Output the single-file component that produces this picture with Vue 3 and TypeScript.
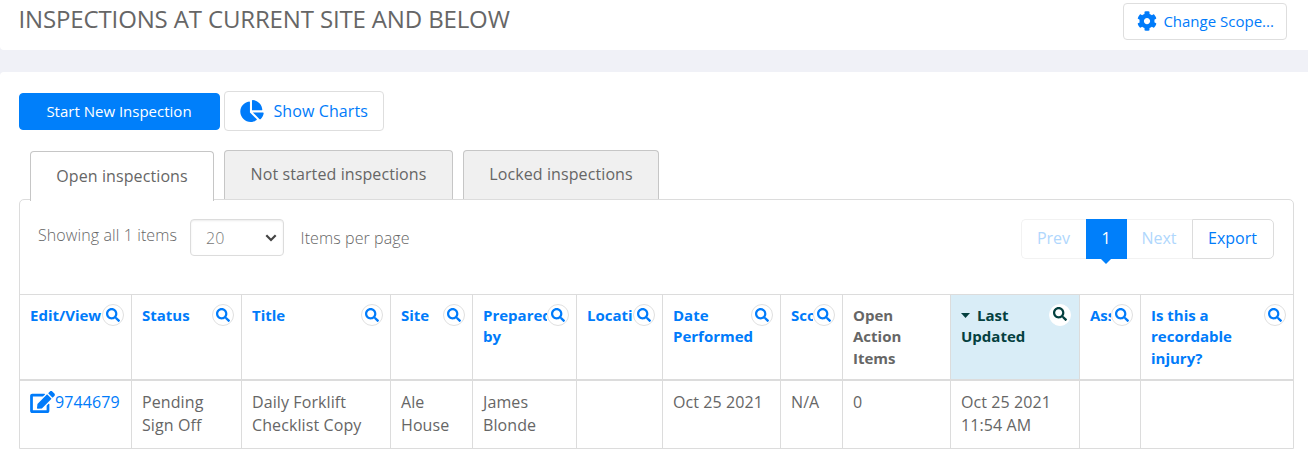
<script setup lang="ts">
import { ref } from 'vue'

interface Column {
  label: string
  search: boolean
  sorted?: boolean
}

interface Tab {
  label: string
  width: number
}

const columns: Column[] = [
  { label: 'Edit/View', search: true },
  { label: 'Status', search: true },
  { label: 'Title', search: true },
  { label: 'Site', search: true },
  { label: 'Prepared by', search: true },
  { label: 'Location', search: true },
  { label: 'Date Performed', search: true },
  { label: 'Score', search: true },
  { label: 'Open Action Items', search: false },
  { label: 'Last Updated', search: true, sorted: true },
  { label: 'Asset', search: true },
  { label: 'Is this a recordable injury?', search: true },
]

const row: string[] = [
  '9744679',
  'Pending Sign Off',
  'Daily Forklift Checklist Copy',
  'Ale House',
  'James Blonde',
  '',
  'Oct 25 2021',
  'N/A',
  '0',
  'Oct 25 2021 11:54 AM',
  '',
  '',
]

const tabs: Tab[] = [
  { label: 'Open inspections', width: 184 },
  { label: 'Not started inspections', width: 229 },
  { label: 'Locked inspections', width: 196 },
]
const activeTab = ref(0)
</script>

<template>
  <div class="page">
    <header class="card heading">
      <h1>Inspections at current site and below</h1>
      <button class="btn scope">
        <svg class="cog" viewBox="0 0 512 512"><path d="M487.4 315.7l-42.6-24.6c4.3-23.2 4.3-47 0-70.2l42.6-24.6c4.9-2.8 7.1-8.6 5.5-14-11.1-35.6-30-67.8-54.7-94.6-3.8-4.1-10-5.1-14.8-2.3L380.8 110c-17.9-15.4-38.5-27.3-60.8-35.1V25.8c0-5.6-3.9-10.5-9.4-11.7-36.7-8.2-74.3-7.8-109.2 0-5.5 1.2-9.4 6.1-9.4 11.7V75c-22.2 7.9-42.8 19.8-60.8 35.1L88.7 85.5c-4.9-2.8-11-1.9-14.8 2.3-24.7 26.7-43.6 58.9-54.7 94.6-1.7 5.4.6 11.2 5.5 14L67.3 221c-4.3 23.2-4.3 47 0 70.2l-42.6 24.6c-4.9 2.8-7.1 8.6-5.5 14 11.1 35.6 30 67.8 54.7 94.6 3.8 4.1 10 5.1 14.8 2.3l42.6-24.6c17.9 15.4 38.5 27.3 60.8 35.1v49.2c0 5.6 3.9 10.5 9.4 11.7 36.7 8.2 74.3 7.8 109.2 0 5.5-1.2 9.4-6.1 9.4-11.7v-49.2c22.2-7.9 42.8-19.8 60.8-35.1l42.6 24.6c4.9 2.8 11 1.9 14.8-2.3 24.7-26.7 43.6-58.9 54.7-94.6 1.5-5.5-.7-11.3-5.6-14.1zM256 336c-44.1 0-80-35.9-80-80s35.9-80 80-80 80 35.9 80 80-35.9 80-80 80z" /></svg>
        <span>Change Scope...</span>
      </button>
    </header>

    <main class="card content">
      <div class="actions">
        <button class="btn primary">Start New Inspection</button>
        <button class="btn charts">
          <svg class="pie" viewBox="0 0 544 512"><path d="M527.79 288H290.5l158.03 158.03c6.04 6.04 15.98 6.53 22.19.68 38.7-36.46 65.32-85.61 73.13-140.86 1.34-9.46-6.51-17.85-16.06-17.85zm-15.83-64.8C503.72 103.74 408.26 8.28 288.8.04 279.68-.59 272 7.1 272 16.24V240h223.77c9.14 0 16.82-7.68 16.19-16.8zM224 288V50.71c0-9.55-8.39-17.4-17.84-16.06C86.99 51.49-4.1 155.6.14 280.37 4.5 408.51 114.83 513.59 243.03 511.98c50.4-.63 96.97-16.87 135.26-44.03 7.9-5.6 8.42-17.23 1.57-24.08L224 288z" /></svg>
          <span>Show Charts</span>
        </button>
      </div>

      <nav class="tabs">
        <button
          v-for="(tab, i) in tabs"
          :key="tab.label"
          class="tab"
          :class="{ active: i === activeTab }"
          :style="{ width: tab.width + 'px' }"
          @click="activeTab = i"
        >{{ tab.label }}</button>
      </nav>

      <section class="panel">
        <div class="toolbar">
          <span class="showing">Showing all 1 items</span>
          <div class="select">
            <span>20</span>
            <svg class="chevron" viewBox="0 0 12 8"><path d="M1.3 1.3L6 6L10.7 1.3" /></svg>
          </div>
          <span class="per-page">Items per page</span>
          <div class="pager">
            <span class="page-btn prev">Prev</span>
            <span class="page-btn current">1</span>
            <span class="page-btn next">Next</span>
            <span class="page-btn export">Export</span>
          </div>
        </div>

        <div class="grid head">
          <div v-for="col in columns" :key="col.label" class="cell" :class="{ sorted: col.sorted, plain: !col.search }">
            <span class="label"><i v-if="col.sorted" class="caret"></i>{{ col.label }}</span>
            <span v-if="col.search" class="finder">
              <span class="circle">
                <svg viewBox="0 0 512 512"><path d="M505 442.7L405.3 343c-4.5-4.5-10.6-7-17-7H372c27.6-35.3 44-79.7 44-128C416 93.1 322.9 0 208 0S0 93.1 0 208s93.1 208 208 208c48.3 0 92.7-16.4 128-44v16.3c0 6.4 2.5 12.5 7 17l99.7 99.7c9.4 9.4 24.6 9.4 33.9 0l28.3-28.3c9.4-9.4 9.4-24.6.1-34zM208 336c-70.7 0-128-57.2-128-128 0-70.7 57.2-128 128-128 70.7 0 128 57.2 128 128 0 70.7-57.2 128-128 128z" /></svg>
              </span>
            </span>
          </div>
        </div>
        <div class="grid body">
          <div v-for="(value, i) in row" :key="i" class="cell" :class="{ link: i === 0 }">
            <svg v-if="i === 0" class="edit" viewBox="0 0 576 512"><path d="M402.6 83.2l90.2 90.2c3.8 3.8 3.8 10 0 13.8L274.4 405.6l-92.8 10.3c-12.4 1.4-22.9-9.1-21.5-21.5l10.3-92.8L388.8 83.2c3.8-3.8 10-3.8 13.8 0zm162-22.9l-48.8-48.8c-15.2-15.2-39.9-15.2-55.2 0l-35.4 35.4c-3.8 3.8-3.8 10 0 13.8l90.2 90.2c3.8 3.8 10 3.8 13.8 0l35.4-35.4c15.2-15.3 15.2-40 0-55.2zM384 346.2V448H64V128h229.8c3.2 0 6.2-1.3 8.5-3.5l40-40c7.6-7.6 2.2-20.5-8.5-20.5H48C21.5 64 0 85.5 0 112v352c0 26.5 21.5 48 48 48h352c26.5 0 48-21.5 48-48V306.2c0-10.7-12.9-16-20.5-8.5l-40 40c-2.2 2.3-3.5 5.3-3.5 8.5z" /></svg>
            <span>{{ value }}</span>
          </div>
        </div>
      </section>
    </main>
  </div>
</template>

<style>
body {
  background: #f0f1f7;
  overflow: hidden;
}
</style>

<style scoped>
.page {
  height: 464px;
  display: flex;
  flex-direction: column;
  gap: 22px;
  font-family: "Open Sans", "Noto Sans", sans-serif;
  font-size: 16px;
  line-height: 22.86px;
  color: #666;
}

.page *,
.page {
  box-sizing: border-box;
}

svg {
  display: block;
  flex: none;
  fill: currentColor;
}

.card {
  background: #fff;
}

.heading {
  flex: none;
  height: 50px;
  display: flex;
  justify-content: space-between;
  align-items: flex-start;
  padding: 3px 21px 0 18.5px;
  border-bottom-left-radius: 4px;
}

h1 {
  margin: 0;
  font-size: 24px;
  line-height: 32px;
  font-weight: 400;
  letter-spacing: -0.14px;
  text-transform: uppercase;
  white-space: nowrap;
}

.content {
  flex: 1;
  min-height: 0;
  padding: 19px 14px 0 19px;
  border-top-left-radius: 4px;
}

.btn {
  display: flex;
  align-items: center;
  font: inherit;
  white-space: nowrap;
  color: #007bfa;
  background: #fff;
  border: 1px solid #dedede;
  border-radius: 4px;
  padding: 0;
}

.scope {
  width: 164px;
  height: 37px;
  padding-left: 13px;
  gap: 6.4px;
  font-size: 15px;
}

.cog {
  width: 20px;
  height: 20px;
  margin-top: -2px;
}

.actions {
  display: flex;
  gap: 4px;
  align-items: flex-end;
  height: 40px;
}

.primary {
  width: 201px;
  height: 37px;
  margin-bottom: 1px;
  padding-right: 1px;
  justify-content: center;
  font-size: 15px;
  color: #fff;
  background: #007ffa;
  border-color: #007ffa;
}

.charts {
  width: 160px;
  height: 40px;
  padding-left: 15px;
  gap: 9.5px;
  letter-spacing: 0.1px;
}

.pie {
  width: 24px;
  height: 22px;
}

.tabs {
  display: flex;
  align-items: flex-end;
  gap: 10px;
  height: 68px;
  padding-left: 11px;
}

.tab {
  font: inherit;
  color: inherit;
  letter-spacing: 0.1px;
  height: 49px;
  padding: 0 0 2px;
  background: #f0f0f0;
  border: 1px solid #c6c6c6;
  border-bottom: 0;
  border-radius: 4px 4px 0 0;
  white-space: nowrap;
}

.tab.active {
  height: 50px;
  margin-bottom: -2px;
  padding-bottom: 0;
  background: #fff;
  position: relative;
  z-index: 1;
}

.panel {
  width: 1275px;
  border: 1px solid #dcdcdc;
  border-radius: 5px 5px 0 0;
}

.toolbar {
  display: flex;
  align-items: flex-start;
  height: 94px;
  padding: 19px 19px 0 18px;
  font-weight: 300;
  letter-spacing: 0.1px;
}

.showing {
  width: 152px;
  margin-top: 5px;
  white-space: nowrap;
}

.select {
  width: 94px;
  height: 37px;
  display: flex;
  align-items: center;
  justify-content: space-between;
  padding: 2px 6px 0 15px;
  border: 1px solid #dcdcdc;
  border-radius: 4px;
  box-shadow: inset 0 1px 2px rgba(0, 0, 0, 0.08);
  color: #777;
}

.chevron {
  width: 12px;
  height: 8px;
  margin-top: -2px;
  fill: none;
  stroke: #444;
  stroke-width: 2.2;
}

.per-page {
  margin: 8px 0 0 16.5px;
}

.pager {
  margin-left: auto;
  display: flex;
  height: 40px;
  font-weight: 400;
  letter-spacing: 0;
  color: #007bfa;
}

.page-btn {
  display: flex;
  align-items: center;
  justify-content: center;
  padding: 0 1px 2px 0;
  border: 1px solid #f2f2f2;
}

.prev {
  width: 65px;
  color: #b0d7fd;
  border-right: 0;
  border-radius: 5px 0 0 5px;
}

.current {
  position: relative;
  width: 41px;
  color: #fff;
  background: #007ffa;
  border-color: #007ffa;
}

.current::after {
  content: "";
  position: absolute;
  top: 100%;
  left: 13px;
  border: 6px solid transparent;
  border-top-color: #007ffa;
  border-bottom: 0;
}

.next {
  width: 65px;
  color: #b0d7fd;
  border-left: 0;
  border-right: 0;
}

.export {
  width: 82px;
  border-color: #dcdcdc;
  border-radius: 0 5px 5px 0;
}

.grid {
  display: grid;
  grid-template-columns: 112px 110px 149px 82px 104px 86px 118px 62px 108px 129px 61px 152px;
  border-top: 1px solid #dcdcdc;
}

.cell {
  min-width: 0;
  padding: 10px;
  border-right: 1px solid #dcdcdc;
}

.cell:last-child {
  border-right: 0;
}

.head .cell {
  position: relative;
  height: 84px;
  overflow: hidden;
  font-size: 15px;
  line-height: 21.43px;
  font-weight: 700;
  color: #007bfa;
}

.head .plain {
  color: #666;
}

.head .sorted {
  color: #04403f;
  background: #d9edf7;
}

.label {
  display: block;
}

.finder {
  position: absolute;
  top: 9px;
  right: 0;
  padding-right: 7.5px;
  background: #fff;
}

.circle {
  display: flex;
  align-items: center;
  justify-content: center;
  width: 22px;
  height: 22px;
  border: 1px solid #e0e0e0;
  border-radius: 50%;
  background: #fff;
}

.circle svg {
  width: 14px;
  height: 14px;
}

.sorted .finder {
  padding-right: 8px;
  background: none;
}

.sorted .circle {
  border-color: #fff;
  padding-bottom: 2px;
}

.caret {
  display: inline-block;
  width: 9px;
  height: 5px;
  margin-right: 7px;
  vertical-align: 3px;
  background: currentColor;
  clip-path: polygon(0 0, 100% 0, 50% 100%);
}

.body {
  border-top-width: 2px;
  letter-spacing: 0.1px;
}

.body .cell {
  height: 67px;
}

.body .link {
  display: flex;
  align-items: flex-start;
  color: #007bfa;
}

.edit {
  width: 25px;
  height: 22px;
}
</style>
